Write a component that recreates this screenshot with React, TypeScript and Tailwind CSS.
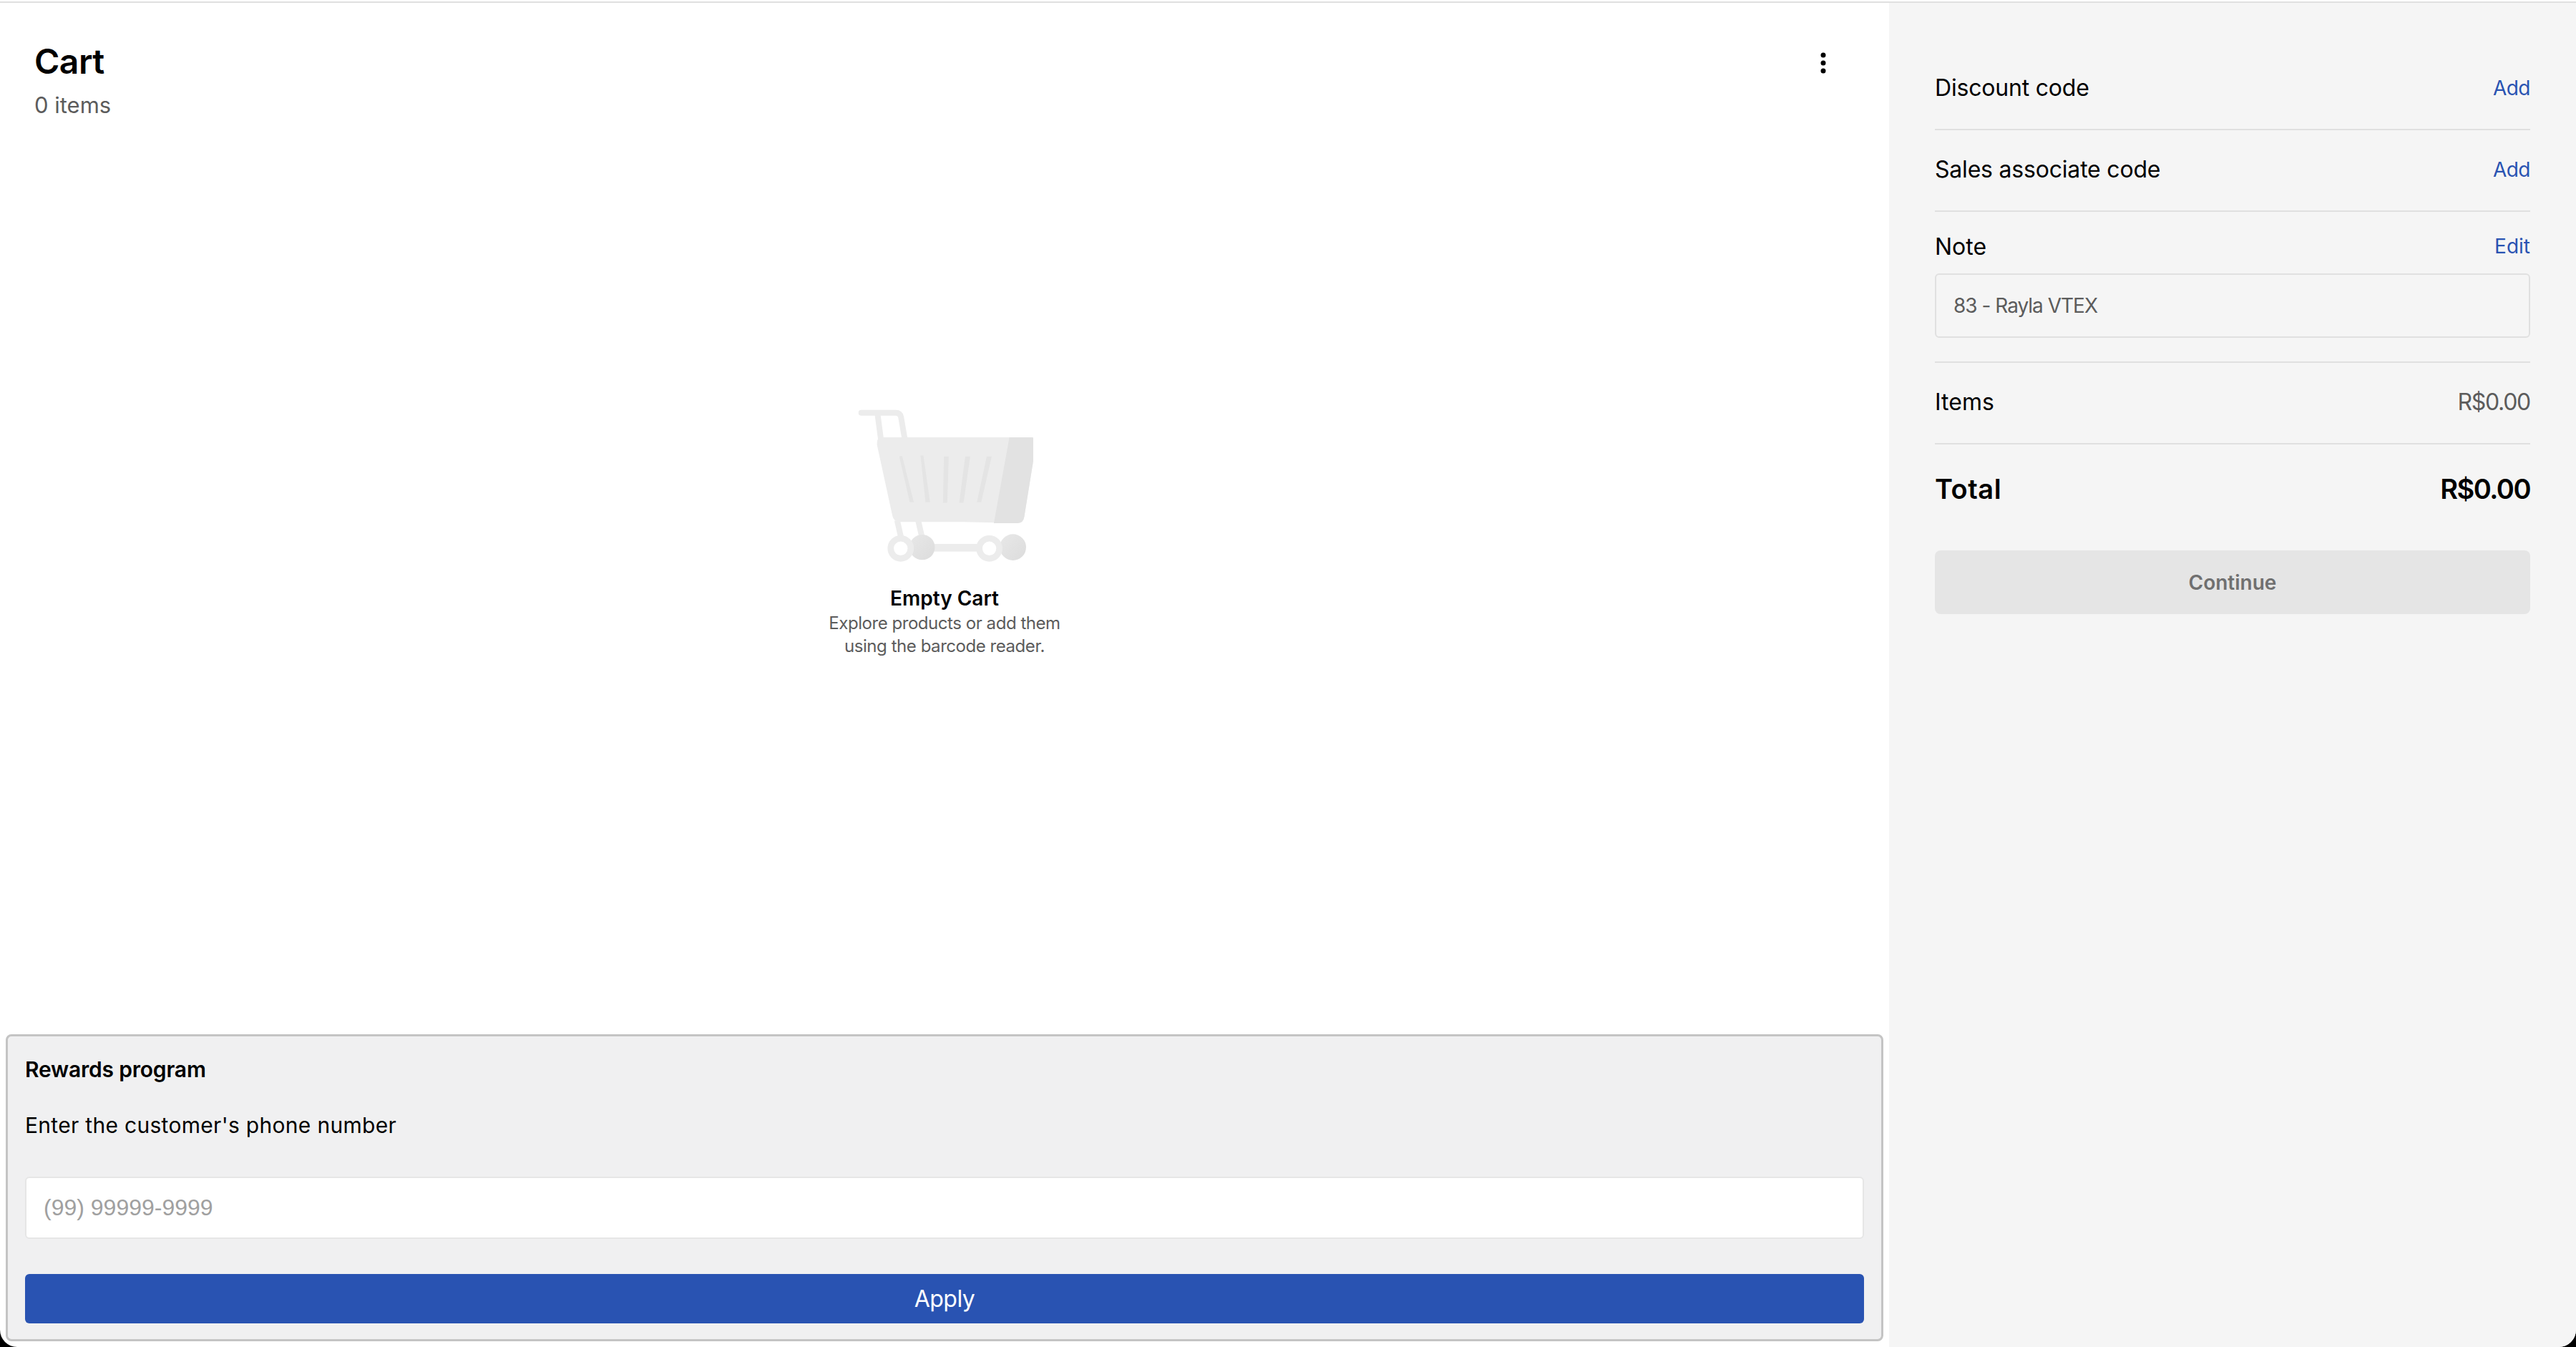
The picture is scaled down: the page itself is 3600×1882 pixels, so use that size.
export default function App() {
  return (
    <div className="w-[3600px] h-[1882px] bg-black overflow-hidden font-['Inter',sans-serif]">
      <div className="h-full rounded-b-[24px] overflow-hidden bg-white pt-[2px] flex flex-col">
        <div className="h-[2px] bg-[#e0e0e0] shrink-0" />
        <div className="flex-1 flex min-h-0">
          <div className="w-[2640px] flex flex-col">
            <div className="flex justify-between items-start pl-[48px] pr-[80px] pt-[54px]">
              <div>
                <h1 className="text-[48px] leading-[56px] font-semibold tracking-[-0.5px] text-black">Cart</h1>
                <p className="text-[31px] leading-[40px] mt-[13px] text-[#5c5c5c]">0 items</p>
              </div>
              <svg width="8" height="32" viewBox="0 0 8 32" className="mt-[14px] mr-[8px]" fill="#000">
                <circle cx="4" cy="5" r="3.5" />
                <circle cx="4" cy="16" r="3.5" />
                <circle cx="4" cy="27" r="3.5" />
              </svg>
            </div>
            <div className="flex-1 flex flex-col items-center pt-[403px]">
              <svg width="247" height="217" viewBox="290 115 740 650">
                <defs>
                  <linearGradient id="wheel" x1="0" y1="0" x2="1" y2="1">
                    <stop offset="0" stopColor="#e8e8e8" />
                    <stop offset="1" stopColor="#dcdcdc" />
                  </linearGradient>
                </defs>
                <path d="M310 135H455Q472 135 476 152L492 245" fill="none" stroke="#ececec" strokeWidth="24" strokeLinecap="round" />
                <path d="M378 140L392 245" fill="none" stroke="#ececec" strokeWidth="24" />
                <path d="M460 585L477 660M548 585L565 660" fill="none" stroke="#ececec" strokeWidth="24" />
                <path d="M390 238H1020Q1044 238 1042 262L992 572Q988 597 965 597L740 592H470Q445 590 440 565L376 270Q374 240 390 238Z" fill="#ececec" />
                <path d="M930 238H1020Q1044 238 1042 262L992 572Q988 597 965 597H865Z" fill="#e2e2e2" />
                <path d="M469 318L481 316L530 510H513ZM558 314L570 314L598 510H579ZM656 318H676L670 512H652ZM745 318H766L738 512H720ZM835 318H856L812 510H794Z" fill="#e4e4e4" />
                <rect x="565" y="684" width="285" height="32" fill="#ececec" />
                <circle cx="565" cy="698" r="53" fill="url(#wheel)" />
                <circle cx="945" cy="698" r="55" fill="url(#wheel)" />
                <circle cx="475" cy="703" r="42" fill="#ffffff" stroke="#ececec" strokeWidth="26" />
                <circle cx="846" cy="703" r="42" fill="#ffffff" stroke="#ececec" strokeWidth="26" />
              </svg>
              <h2 className="text-[28px] leading-[36px] font-semibold text-black mt-[31px]">Empty Cart</h2>
              <p className="text-[24px] leading-[32px] tracking-[-0.45px] text-[#5c5c5c] text-center mt-[1px]">Explore products or add them<br />using the barcode reader.</p>
            </div>
            <div className="mx-[8px] mb-[8px] h-[429px] shrink-0 rounded-[8px] border-[3px] border-[#c4c4c4] bg-[#f0f0f1] px-[24px] pt-[26px]">
              <h3 className="text-[30px] leading-[40px] font-semibold tracking-[-0.2px] text-black">Rewards program</h3>
              <p className="text-[30px] leading-[40px] tracking-[0.3px] text-black mt-[38px]">Enter the customer's phone number</p>
              <input placeholder="(99) 99999-9999" className="block w-full h-[87px] mt-[52px] bg-white rounded-[6px] border-2 border-[#e6e6e6] px-[24px] text-[32px] font-['Liberation_Sans',sans-serif] placeholder:text-[#a0a0a0] outline-none" />
              <button className="block w-full h-[69px] mt-[49px] rounded-[6px] bg-[#2953b2] text-white text-[32px] tracking-[-0.5px]">Apply</button>
            </div>
          </div>
          <div className="flex-1 bg-[#f5f5f5] px-[64px] text-[32px] text-black">
            <div className="h-[178px] flex justify-between items-center border-b-[2px] border-[#e0e0e0] pt-[62px] tracking-[-0.2px]">
              <span>Discount code</span>
              <span className="text-[28px] tracking-[-0.5px] text-[#2953b2]">Add</span>
            </div>
            <div className="h-[114px] flex justify-between items-center border-b-[2px] border-[#e0e0e0] pb-[2px] tracking-[-0.2px]">
              <span>Sales associate code</span>
              <span className="text-[28px] tracking-[-0.5px] text-[#2953b2]">Add</span>
            </div>
            <div className="h-[211px] pt-[29px] border-b-[2px] border-[#e0e0e0]">
              <div className="flex justify-between items-center h-[40px]">
                <span>Note</span>
                <span className="text-[28px] text-[#2953b2] mb-[2px]">Edit</span>
              </div>
              <div className="mt-[17px] h-[90px] rounded-[6px] border-[2px] border-[#e0e0e0] px-[24px] flex items-center text-[28px] tracking-[-1px] text-[#5c5c5c]">83 - Rayla VTEX</div>
            </div>
            <div className="h-[114px] flex justify-between items-center border-b-[2px] border-[#e0e0e0] pb-[2px]">
              <span>Items</span>
              <span className="text-[#5c5c5c] tracking-[-1.3px]">R$0.00</span>
            </div>
            <div className="h-[124px] flex justify-between items-center text-[38px] font-semibold">
              <span className="tracking-[0.5px]">Total</span>
              <span className="tracking-[-1.5px]">R$0.00</span>
            </div>
            <button className="block w-full h-[89px] mt-[24px] rounded-[8px] bg-[#e5e5e5] text-[#707070] text-[28px] font-semibold">Continue</button>
          </div>
        </div>
      </div>
    </div>
  );
}
